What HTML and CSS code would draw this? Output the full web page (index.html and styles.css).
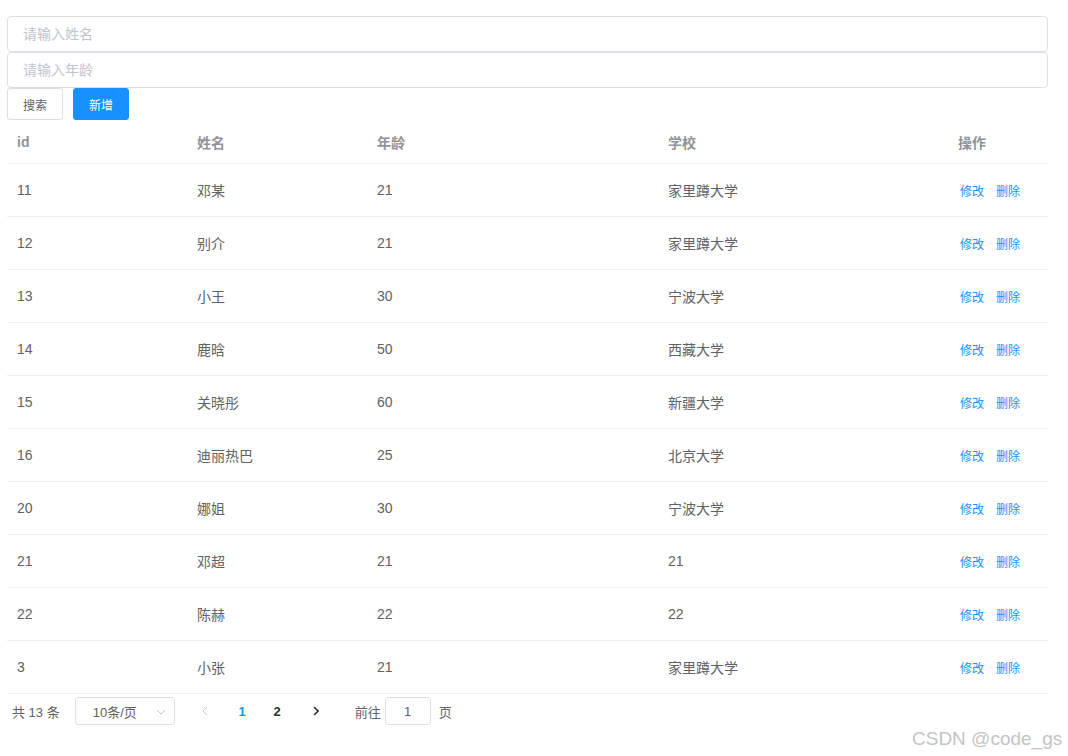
FILE: index.html
```html
<!DOCTYPE html>
<html lang="zh-CN">
<head>
  <meta charset="UTF-8">
  <meta name="viewport" content="width=device-width, initial-scale=1.0">
  <title>学生管理</title>
  <link rel="stylesheet" href="styles.css">
</head>
<body>
  <div class="page">
    <div class="searchBox">
      <input type="text" class="textInput" placeholder="请输入姓名" />
      <input type="text" class="textInput" placeholder="请输入年龄" />
      <div class="btnRow">
        <button class="btn">搜索</button>
        <button class="btn btnPrimary">新增</button>
      </div>
    </div>

    <table class="stuTable">
      <colgroup>
        <col style="width: 180px">
        <col style="width: 180px">
        <col style="width: 291px">
        <col style="width: 290px">
        <col style="width: 100px">
      </colgroup>
      <thead>
        <tr>
          <th>id</th>
          <th>姓名</th>
          <th>年龄</th>
          <th>学校</th>
          <th>操作</th>
        </tr>
      </thead>
      <tbody>
        <tr><td>11</td><td>邓某</td><td>21</td><td>家里蹲大学</td><td><a class="opLink">修改</a><a class="opLink">删除</a></td></tr>
        <tr><td>12</td><td>别介</td><td>21</td><td>家里蹲大学</td><td><a class="opLink">修改</a><a class="opLink">删除</a></td></tr>
        <tr><td>13</td><td>小王</td><td>30</td><td>宁波大学</td><td><a class="opLink">修改</a><a class="opLink">删除</a></td></tr>
        <tr><td>14</td><td>鹿晗</td><td>50</td><td>西藏大学</td><td><a class="opLink">修改</a><a class="opLink">删除</a></td></tr>
        <tr><td>15</td><td>关晓彤</td><td>60</td><td>新疆大学</td><td><a class="opLink">修改</a><a class="opLink">删除</a></td></tr>
        <tr><td>16</td><td>迪丽热巴</td><td>25</td><td>北京大学</td><td><a class="opLink">修改</a><a class="opLink">删除</a></td></tr>
        <tr><td>20</td><td>娜姐</td><td>30</td><td>宁波大学</td><td><a class="opLink">修改</a><a class="opLink">删除</a></td></tr>
        <tr><td>21</td><td>邓超</td><td>21</td><td>21</td><td><a class="opLink">修改</a><a class="opLink">删除</a></td></tr>
        <tr><td>22</td><td>陈赫</td><td>22</td><td>22</td><td><a class="opLink">修改</a><a class="opLink">删除</a></td></tr>
        <tr><td>3</td><td>小张</td><td>21</td><td>家里蹲大学</td><td><a class="opLink">修改</a><a class="opLink">删除</a></td></tr>
      </tbody>
    </table>

    <div class="pager">
      <span class="pagerTotal">共 13 条</span>
      <div class="sizeSelect">
        <span>10条/页</span>
        <svg class="selectArrow" width="10" height="6" viewBox="0 0 10 6"><path d="M1 1 L5 5 L9 1" fill="none" stroke="#c0c4cc" stroke-width="1"/></svg>
      </div>
      <button class="pageBtn">
        <svg width="6" height="10" viewBox="0 0 6 10"><path d="M5 1 L1 5 L5 9" fill="none" stroke="#c0c4cc" stroke-width="1"/></svg>
      </button>
      <span class="pageNum active">1</span>
      <span class="pageNum pageLast">2</span>
      <button class="pageBtn">
        <svg width="6" height="10" viewBox="0 0 6 10"><path d="M1 1 L5 5 L1 9" fill="none" stroke="#303133" stroke-width="1.6"/></svg>
      </button>
      <span class="jumpText jumpStart">前往</span>
      <input type="text" class="jumpInput" value="1" />
      <span class="jumpText">页</span>
    </div>
  </div>

  <div class="watermark">CSDN @code_gs</div>
</body>
</html>
```

FILE: styles.css
```css
body {
  margin: 0;
  font-family: "Liberation Sans", "Noto Sans CJK SC", sans-serif;
  color: #606266;
  background: #fff;
}
.page {
  width: 1041px;
  padding: 16px 0 0 7px;
}
.searchBox {
  display: flex;
  flex-direction: column;
}
.textInput {
  box-sizing: border-box;
  width: 1041px;
  height: 36px;
  padding: 0 15px;
  border: 1px solid #dcdfe6;
  border-radius: 4px;
  font-family: inherit;
  font-size: 14px;
  color: #606266;
  outline: none;
}
.textInput::placeholder {
  color: #c0c4cc;
}
.btnRow {
  display: flex;
  gap: 10px;
}
.btn {
  box-sizing: border-box;
  width: 56px;
  height: 32px;
  border: 1px solid #dcdfe6;
  border-radius: 3px;
  background: #fff;
  color: #606266;
  font-family: inherit;
  font-size: 12px;
  cursor: pointer;
}
.btnPrimary {
  background: #1890ff;
  border-color: #1890ff;
  color: #fff;
}
.stuTable {
  width: 1041px;
  border-collapse: collapse;
  table-layout: fixed;
  font-size: 14px;
}
.stuTable th {
  height: 43px;
  padding: 0 10px;
  text-align: left;
  font-weight: bold;
  color: #909399;
  border-bottom: 1px solid #ebeef5;
}
.stuTable td {
  height: 52px;
  padding: 0 10px;
  color: #606266;
  border-bottom: 1px solid #ebeef5;
}
.opLink {
  color: #1890ff;
  font-size: 12px;
  margin-left: 2px;
  margin-right: 10px;
  cursor: pointer;
}
.pager {
  display: flex;
  align-items: center;
  height: 34px;
  padding: 0 5px;
  font-size: 13px;
  color: #606266;
}
.pagerTotal {
  margin-right: 15px;
}
.sizeSelect {
  box-sizing: border-box;
  width: 100px;
  height: 28px;
  border: 1px solid #dcdfe6;
  border-radius: 3px;
  display: flex;
  align-items: center;
  padding: 0 8px 0 17px;
  justify-content: space-between;
  margin-right: 15px;
}
.selectArrow {
  margin-top: 1px;
}
.pageBtn {
  width: 30px;
  height: 28px;
  margin-right: 5px;
  border: none;
  background: none;
  padding: 0;
  display: flex;
  align-items: center;
  justify-content: center;
}
.pageNum {
  min-width: 35px;
  text-align: center;
  font-weight: bold;
  color: #303133;
}
.pageLast {
  margin-right: 6px;
}
.pageNum.active {
  color: #1890ff;
}
.jumpText {
  margin-left: 4px;
}
.jumpStart {
  margin-left: 19px;
}
.jumpInput {
  box-sizing: border-box;
  width: 46px;
  height: 28px;
  margin: 0 4px;
  border: 1px solid #dcdfe6;
  border-radius: 3px;
  text-align: center;
  font-family: inherit;
  font-size: 13px;
  color: #606266;
}
.watermark {
  position: absolute;
  left: 912px;
  top: 728px;
  font-size: 19px;
  color: #c4c4c4;
  font-family: "Liberation Sans", sans-serif;
}
```
